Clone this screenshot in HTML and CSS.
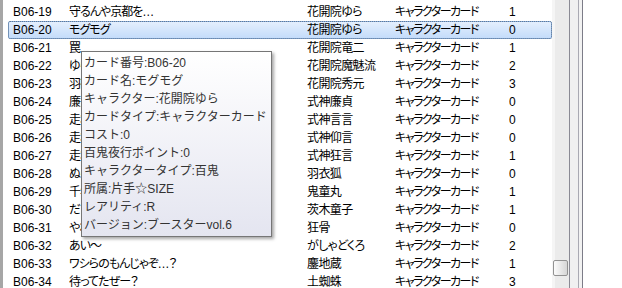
FILE: index.html
```html
<!DOCTYPE html>
<html lang="ja">
<head>
<meta charset="utf-8">
<title>カードリスト</title>
<link rel="stylesheet" href="styles.css">
</head>
<body>
<div class="window">
  <div class="edge"></div>
  <div class="list">
    <div class="row"><span>B06-19</span><span class="nm">守るんや京都を…</span><span class="ch">花開院ゆら</span><span class="ty">キャラクターカード</span><span>1</span></div>
    <div class="row selected"><span>B06-20</span><span class="nm">モグモグ</span><span class="ch">花開院ゆら</span><span class="ty">キャラクターカード</span><span>0</span></div>
    <div class="row"><span>B06-21</span><span class="nm">罠</span><span class="ch">花開院竜二</span><span class="ty">キャラクターカード</span><span>1</span></div>
    <div class="row"><span>B06-22</span><span class="nm">ゆらのために</span><span class="ch">花開院魔魅流</span><span class="ty">キャラクターカード</span><span>2</span></div>
    <div class="row"><span>B06-23</span><span class="nm">羽衣狐を討つ</span><span class="ch">花開院秀元</span><span class="ty">キャラクターカード</span><span>3</span></div>
    <div class="row"><span>B06-24</span><span class="nm">廉貞</span><span class="ch">式神廉貞</span><span class="ty">キャラクターカード</span><span>0</span></div>
    <div class="row"><span>B06-25</span><span class="nm">走れ</span><span class="ch">式神言言</span><span class="ty">キャラクターカード</span><span>0</span></div>
    <div class="row"><span>B06-26</span><span class="nm">走れ</span><span class="ch">式神仰言</span><span class="ty">キャラクターカード</span><span>0</span></div>
    <div class="row"><span>B06-27</span><span class="nm">走れ</span><span class="ch">式神狂言</span><span class="ty">キャラクターカード</span><span>1</span></div>
    <div class="row"><span>B06-28</span><span class="nm">ぬらりひょん</span><span class="ch">羽衣狐</span><span class="ty">キャラクターカード</span><span>0</span></div>
    <div class="row"><span>B06-29</span><span class="nm">千年の時</span><span class="ch">鬼童丸</span><span class="ty">キャラクターカード</span><span>1</span></div>
    <div class="row"><span>B06-30</span><span class="nm">だまれ</span><span class="ch">茨木童子</span><span class="ty">キャラクターカード</span><span>1</span></div>
    <div class="row"><span>B06-31</span><span class="nm">やれ</span><span class="ch">狂骨</span><span class="ty">キャラクターカード</span><span>0</span></div>
    <div class="row"><span>B06-32</span><span class="nm">あい〜</span><span class="ch">がしゃどくろ</span><span class="ty">キャラクターカード</span><span>2</span></div>
    <div class="row"><span>B06-33</span><span class="nm">ワシらのもんじゃぞ…？</span><span class="ch">鏖地蔵</span><span class="ty">キャラクターカード</span><span>1</span></div>
    <div class="row"><span>B06-34</span><span class="nm">待ってたぜー？</span><span class="ch">土蜘蛛</span><span class="ty">キャラクターカード</span><span>3</span></div>
  </div>
  <div class="vscroll"><div class="thumb"></div></div>
  <div class="frame"></div>
  <div class="rest"></div>
  <div class="tooltip">
    <div>カード番号:B06-20</div>
    <div>カード名:モグモグ</div>
    <div>キャラクター:花開院ゆら</div>
    <div>カードタイプ:キャラクターカード</div>
    <div>コスト:0</div>
    <div>百鬼夜行ポイント:0</div>
    <div>キャラクタータイプ:百鬼</div>
    <div>所属:片手☆SIZE</div>
    <div>レアリティ:R</div>
    <div>バージョン:ブースターvol.6</div>
  </div>
</div>
</body>
</html>
```

FILE: styles.css
```css
html, body {
  margin: 0;
  padding: 0;
  background: #fff;
}
body {
  width: 622px;
  height: 288px;
  overflow: hidden;
  font-family: "Liberation Sans", "Noto Sans CJK JP", sans-serif;
  font-size: 12px;
  color: #000;
}
.window {
  position: relative;
  display: flex;
  height: 288px;
  overflow: hidden;
}
.edge {
  width: 3px;
  flex: none;
  background: #a6a6a6;
}
.list {
  width: 549px;
  flex: none;
  padding: 3px 0 0 5px;
  box-sizing: border-box;
}
.row {
  display: grid;
  grid-template-columns: 56px 238px 88px 114px 1fr;
  height: 18px;
  align-items: center;
  padding-left: 5px;
  box-sizing: border-box;
  white-space: nowrap;
  font-feature-settings: "palt";
  line-height: 18px;
}
.row span {
  overflow: hidden;
}
.row .nm {
  letter-spacing: -1px;
}
.row .ch {
  letter-spacing: -0.6px;
}
.row .ty {
  letter-spacing: -1.5px;
}
.row.selected {
  border: 1px solid #84acdd;
  border-radius: 2px;
  background: linear-gradient(#e4effd, #c4dcfa);
  padding-left: 4px;
  line-height: 16px;
  outline: 1px dotted rgba(60, 60, 60, 0.45);
  outline-offset: -1px;
}
.vscroll {
  width: 17px;
  flex: none;
  background: linear-gradient(to right, #f5f5f5 0 3px, #ebebeb 3px);
  display: flex;
  flex-direction: column;
}
.thumb {
  margin: 260px 0 0 1px;
  width: 15px;
  height: 16px;
  box-sizing: border-box;
  border: 1px solid #929292;
  border-radius: 2px;
  background: linear-gradient(to right, #fbfbfb, #d6d6d6);
}
.frame {
  width: 12px;
  flex: none;
  border-left: 1px solid #8a8a94;
  border-right: 1px solid #7c7c88;
  background: linear-gradient(to right, #f0f0f0 0 8px, #a9a9b2 8px 9px, #f2f2f2 9px);
}
.rest {
  flex: 1;
  background: #fff;
}
.tooltip {
  position: absolute;
  left: 81px;
  top: 51px;
  width: 191px;
  height: 186px;
  box-sizing: border-box;
  border: 1px solid #767676;
  background: linear-gradient(#ffffff, #e4e5f0);
  box-shadow: 2px 2px 3px rgba(0, 0, 0, 0.35);
  padding: 2px 0 0 2px;
  font-size: 12px;
  line-height: 18px;
  color: #333;
  white-space: nowrap;
}
```
